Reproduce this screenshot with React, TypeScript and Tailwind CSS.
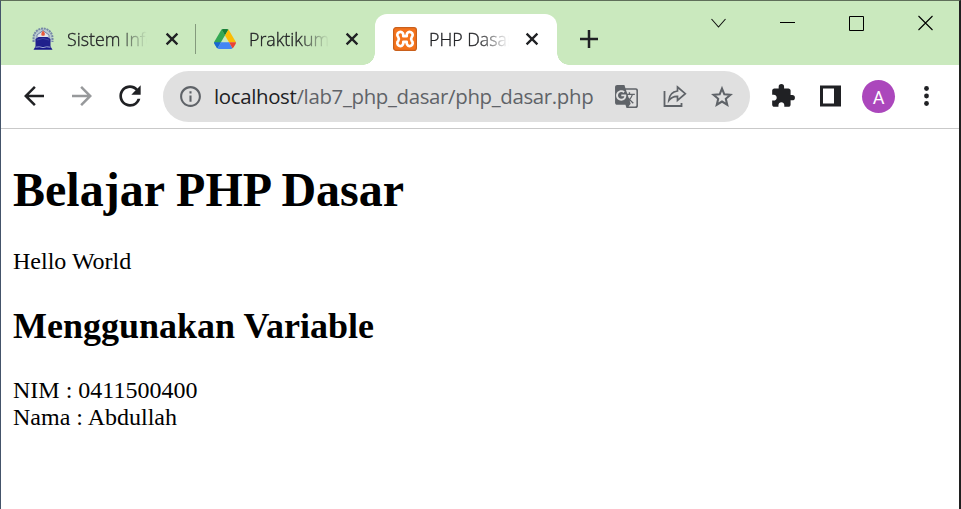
import type { ReactNode } from "react";
import { MdArrowBack, MdArrowForward, MdRefresh, MdOutlineInfo, MdGTranslate, MdExtension } from "react-icons/md";

function CloseIcon() {
  return (
    <svg width="14" height="14" viewBox="0 0 14 14" className="shrink-0">
      <path d="M1.6 1.6 12.4 12.4M12.4 1.6 1.6 12.4" stroke="#202124" strokeWidth="2.3" fill="none" />
    </svg>
  );
}

function CampusIcon() {
  return (
    <svg width="22" height="24" viewBox="0 0 22 24" className="shrink-0">
      <path d="M1.500 15V11a9.500 9.500 0 0 1 19 0v4" fill="#b9cbd0" stroke="#7587a6" strokeWidth="2" strokeDasharray="2 .8" />
      <path d="M5 13V8l6-4.500L17 8v5" fill="#dfe5ea" stroke="#6b7aa0" strokeWidth=".9" />
      <path d="M3.500 12l3-2h9l3 2v8h-15z" fill="#20208c" />
      <path d="M1.500 22.800l2-3.300h15l2 3.300z" fill="#15158a" />
      <path d="M3.500 20.200q4-1 7.500.4 3.500-1.400 7.500-.4" fill="none" stroke="#a9b6d8" strokeWidth=".9" />
      <path d="M5 13l6-1.500 6 1.500" fill="none" stroke="#4450a3" strokeWidth=".8" />
      <path d="M11 3.500q3 3 1.300 5.200H9.700Q8.500 6.500 11 3.500z" fill="#e65a3c" />
    </svg>
  );
}

function DriveIcon() {
  return (
    <svg width="22" height="20" viewBox="0 0 22 20" className="shrink-0">
      <path d="M7.500.5 0 13.300l3.400 5.900L11 6.300z" fill="#34a853" />
      <path d="M7.500.5Q8.200 0 9 0h4q.9 0 1.500.5L11 6.400z" fill="#188038" />
      <path d="M14.500.5 22 13.300h-7L11 6.400z" fill="#fbbc04" />
      <path d="M0 13.300h7l-3.500 6Q2.700 19 2.400 18.200L.4 15Q0 14.300 0 13.300z" fill="#1967d2" />
      <path d="M7 13.300h8l3.500 6q-.6.7-1.500.7H5q-1 0-1.500-.7z" fill="#4285f4" />
      <path d="M15 13.300h7q0 1-.4 1.700l-2 3.300q-.4.700-1.100 1z" fill="#ea4335" />
    </svg>
  );
}

function XamppIcon() {
  return (
    <svg width="24" height="24" viewBox="0 0 24 24" className="shrink-0">
      <rect x=".6" y=".6" width="22.800" height="22.800" rx="2.500" fill="#f4731c" stroke="#c9601c" strokeWidth="1.200" />
      <path
        d="M10.300 9.200V8a3 3 0 1 0-5 2.200Q6.500 12 5.300 13.800a3 3 0 1 0 5 2.200v-1.200h3.400V16a3 3 0 1 0 5-2.200Q17.500 12 18.700 10.200a3 3 0 1 0-5-2.200v1.200z"
        fill="none" stroke="#fff" strokeWidth="2.700" strokeLinejoin="round"
      />
    </svg>
  );
}

function TabTitle({ children }: { children: ReactNode }) {
  return (
    <span className="w-[80px] shrink-0 whitespace-nowrap font-['Open_Sans','Noto_Sans',sans-serif] text-[17.8px] leading-[26px] font-light text-[#202124] [-webkit-text-stroke:0.3px_#202124] [mask-image:linear-gradient(to_right,black_62%,transparent_100%)]">
      {children}
    </span>
  );
}

function TabStrip() {
  return (
    <header className="flex h-16 shrink-0 items-end bg-[#cae9be]">
      <div className="flex h-[51px] w-[194px] items-center pb-0.5 pl-[31px]">
        <CampusIcon />
        <span className="w-[13px]" />
        <TabTitle>Sistem Info</TabTitle>
        <span className="w-[18px]" />
        <CloseIcon />
      </div>
      <div className="mb-[11px] h-[30px] w-px bg-[#849a7d]" />
      <div className="flex h-[51px] w-[179px] items-center pb-0.5 pl-[18px]">
        <DriveIcon />
        <span className="w-[13px]" />
        <TabTitle>Praktikum</TabTitle>
        <span className="w-[16px]" />
        <CloseIcon />
      </div>
      <div className="relative flex h-[51px] w-[182px] items-center rounded-t-xl bg-white pb-0.5 pl-[18px]">
        <span className="absolute bottom-0 -left-3 size-3 bg-[radial-gradient(circle_at_0_0,transparent_11.5px,white_12px)]" />
        <span className="absolute -right-3 bottom-0 size-3 bg-[radial-gradient(circle_at_100%_0,transparent_11.5px,white_12px)]" />
        <XamppIcon />
        <span className="w-[12px]" />
        <TabTitle>PHP Dasar</TabTitle>
        <span className="w-[16px]" />
        <CloseIcon />
      </div>
      <div className="flex h-[51px] items-center pb-0.5 pl-[23px]">
        <svg width="18" height="18" viewBox="0 0 18 18">
          <path d="M9 0v18M0 9h18" stroke="#202124" strokeWidth="2.500" />
        </svg>
      </div>
      <div className="ml-auto flex h-full items-start pt-[14px] pr-[26px]">
        <svg width="15" height="16" viewBox="0 0 15 16" className="mr-[54px]">
          <path d="M.5 4 7.500 12 14.500 4" fill="none" stroke="#111" strokeWidth="1.100" />
        </svg>
        <svg width="15" height="16" viewBox="0 0 15 16" className="mr-[54px]">
          <path d="M0 7.500h15" stroke="#000" />
        </svg>
        <svg width="15" height="16" viewBox="0 0 15 16" className="mr-[54px]">
          <path d="M.5 1.500h14v14H.5z" fill="none" stroke="#000" />
        </svg>
        <svg width="15" height="16" viewBox="0 0 15 16">
          <path d="M.5 1l14 14M14.500 1l-14 14" stroke="#000" strokeWidth="1.100" />
        </svg>
      </div>
    </header>
  );
}

function Toolbar() {
  return (
    <div className="flex h-16 shrink-0 items-center border-b border-[#c9c9c9] bg-white pl-[18px] text-[#202124]">
      <MdArrowBack size={30} className="mb-0.5" />
      <MdArrowForward size={30} className="mb-0.5 ml-[18px] text-[#97999b]" />
      <MdRefresh size={32} className="mb-0.5 ml-[17px]" />
      <div className="ml-[17px] flex h-[51px] w-[587px] items-center rounded-full bg-[#e0e0e0] pl-[15px] text-[#5f6368]">
        <MdOutlineInfo size={25} />
        <div className="mb-px ml-[11px] w-[401px] whitespace-nowrap font-['Open_Sans','Noto_Sans',sans-serif] text-[20.4px] leading-7 tracking-[-0.33px]">
          <span className="text-[#202124]">localhost</span>/lab7_php_dasar/php_dasar.php
        </div>
        <MdGTranslate size={25} className="-ml-px" />
        <svg width="24" height="24" viewBox="0 0 24 24" className="ml-[24px]">
          <path d="M1.500 6v15h17V18" fill="none" stroke="#5f6368" strokeWidth="1.800" />
          <path d="M14.500 2 22.300 8.700 14.500 15.300v-4Q9 11.100 5.800 15.500 6.500 7 14.500 6z" fill="none" stroke="#5f6368" strokeWidth="1.700" />
        </svg>
        <svg width="26" height="26" viewBox="0 0 24 24" className="ml-[22px]">
          <path
            d="M12 4.200l2.150 5.300 5.650.45-4.300 3.700 1.330 5.500L12 16.200l-4.830 2.950 1.330-5.500-4.300-3.700 5.650-.45z"
            fill="none" stroke="#5f6368" strokeWidth="1.900"
          />
        </svg>
      </div>
      <MdExtension size={26} className="mb-0.5 ml-5" />
      <svg width="22" height="22" viewBox="0 0 22 22" className="mb-0.5 ml-[23px]">
        <path fillRule="evenodd" d="M1 .5h21v21H1zM4 3.500v15h11v-15z" fill="#202124" />
      </svg>
      <div className="ml-[21px] flex size-[33px] items-center justify-center rounded-full bg-[#ab47bc] pt-px font-[Roboto,sans-serif] text-[18px] text-white">A</div>
      <svg width="6" height="20" viewBox="0 0 6 20" className="mb-0.5 ml-[28px]">
        <circle cx="3.500" cy="2.500" r="2.400" fill="#202124" />
        <circle cx="3.500" cy="10" r="2.400" fill="#202124" />
        <circle cx="3.500" cy="17.500" r="2.400" fill="#202124" />
      </svg>
    </div>
  );
}

export default function App() {
  return (
    <div className="flex h-[509px] w-[961px] flex-col overflow-hidden border-t border-r-2 border-l border-t-[#5f6f5a] border-r-[#202020] border-l-[#44546a] bg-white">
      <TabStrip />
      <Toolbar />
      <main className="px-3 font-['Liberation_Serif','Times_New_Roman',serif] text-2xl leading-[27px] text-black">
        <h1 className="mt-[33px] text-[48px] leading-[55px] font-bold">Belajar PHP Dasar</h1>
        <p className="mt-[31px]">Hello World</p>
        <h2 className="mt-[31px] text-[36px] leading-[41px] font-bold">Menggunakan Variable</h2>
        <p className="mt-[30px]">
          NIM : 0411500400
          <br />
          Nama : Abdullah
        </p>
      </main>
    </div>
  );
}
